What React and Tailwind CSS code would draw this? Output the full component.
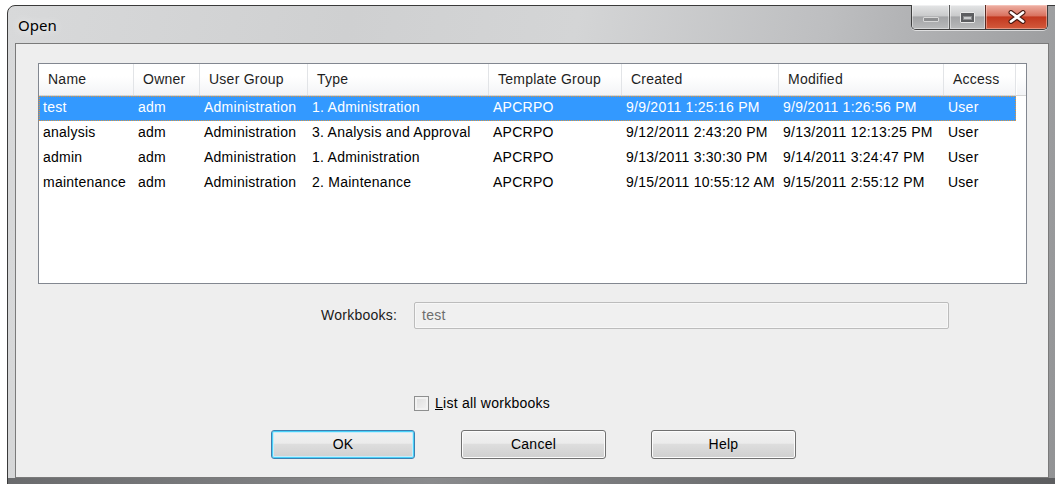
const COLUMNS = [
  { key: 'name', label: 'Name', width: 'w-[95px]' },
  { key: 'owner', label: 'Owner', width: 'w-[66px]' },
  { key: 'group', label: 'User Group', width: 'w-[108px]' },
  { key: 'type', label: 'Type', width: 'w-[181px]' },
  { key: 'template', label: 'Template Group', width: 'w-[133px]' },
  { key: 'created', label: 'Created', width: 'w-[157px]' },
  { key: 'modified', label: 'Modified', width: 'w-[165px]' },
  { key: 'access', label: 'Access', width: 'w-[72px]' },
]

const ROWS = [
  { name: 'test', owner: 'adm', group: 'Administration', type: '1. Administration', template: 'APCRPO', created: '9/9/2011 1:25:16 PM', modified: '9/9/2011 1:26:56 PM', access: 'User' },
  { name: 'analysis', owner: 'adm', group: 'Administration', type: '3. Analysis and Approval', template: 'APCRPO', created: '9/12/2011 2:43:20 PM', modified: '9/13/2011 12:13:25 PM', access: 'User' },
  { name: 'admin', owner: 'adm', group: 'Administration', type: '1. Administration', template: 'APCRPO', created: '9/13/2011 3:30:30 PM', modified: '9/14/2011 3:24:47 PM', access: 'User' },
  { name: 'maintenance', owner: 'adm', group: 'Administration', type: '2. Maintenance', template: 'APCRPO', created: '9/15/2011 10:55:12 AM', modified: '9/15/2011 2:55:12 PM', access: 'User' },
]

function CaptionButtons() {
  return (
    <div className="flex h-[25px] mr-[18px] -mt-px rounded-b-[5px] border border-t-0 border-[#3e3e3e] overflow-hidden shadow-[0_1px_0_rgba(255,255,255,0.6)]">
      <div className="w-[37px] flex items-end justify-center pb-[7px] bg-[linear-gradient(180deg,#e4e5e6_0%,#c9cacb_45%,#a3a4a6_50%,#b9babb_100%)] shadow-[inset_0_0_0_1px_rgba(255,255,255,0.45)]">
        <div className="w-[16px] h-[5px] rounded-[1px] bg-[#8d8e90] border border-[#d8d8d8]" />
      </div>
      <div className="w-[36px] flex items-center justify-center border-l border-[#5a5a5a] bg-[linear-gradient(180deg,#e4e5e6_0%,#c9cacb_45%,#a3a4a6_50%,#b9babb_100%)] shadow-[inset_0_0_0_1px_rgba(255,255,255,0.45)]">
        <div className="w-[15px] h-[11px] rounded-[1px] border border-[#e8e8e8] bg-[#5c5d60] p-[2px] pt-[3px]">
          <div className="w-full h-full bg-[#c9cacc] border border-[#8a8b8d]" />
        </div>
      </div>
      <div className="w-[62px] flex items-center justify-center border-l border-[#5a2a22] bg-[linear-gradient(180deg,#eeb1a5_0%,#d9725f_45%,#c2381f_50%,#d35a3c_100%)] shadow-[inset_0_0_0_1px_rgba(255,220,210,0.45)]">
        <svg width="20" height="14" viewBox="0 0 20 14">
          <path d="M4 2.5 L16 11.5 M16 2.5 L4 11.5" stroke="#4a1a12" strokeWidth="5" strokeLinecap="round" />
          <path d="M4 2.5 L16 11.5 M16 2.5 L4 11.5" stroke="#ffffff" strokeWidth="2.8" strokeLinecap="round" />
        </svg>
      </div>
    </div>
  )
}

function FileList() {
  return (
    <div className="ml-[22px] mt-[19px] w-[989px] h-[221px] border border-[#828790] bg-white flex flex-col">
      {/* column headers */}
      <div className="h-[32px] flex border-b border-[#d5d5d5] bg-[linear-gradient(180deg,#ffffff_0%,#ffffff_40%,#f3f4f6_100%)]">
        {COLUMNS.map(col => (
          <div key={col.key} className={`${col.width} shrink-0 flex items-center pl-[9px] border-r border-[#e2e4e7] text-[#1e1e1e] whitespace-nowrap`}>
            {col.label}
          </div>
        ))}
        <div className="flex-1 border-l border-white" />
      </div>

      {ROWS.map((row, i) => {
        const selected = i === 0
        return (
          <div key={row.name}
            className={selected
              ? 'h-[25px] w-[977px] flex items-center pb-[2px] bg-[#3399ff] text-white border border-dotted border-[#e0963c]'
              : 'h-[25px] w-[977px] flex items-center pb-[2px] text-black border border-transparent'}>
            {COLUMNS.map(col => (
              <div key={col.key} className={`${col.width} shrink-0 pl-[3px] whitespace-nowrap`}>
                {row[col.key]}
              </div>
            ))}
          </div>
        )
      })}
    </div>
  )
}

function Button({ children, primary }) {
  return (
    <button className={primary
      ? 'w-[144px] h-[29px] rounded-[3px] border border-[#3c7fb1] bg-[linear-gradient(180deg,#f2f2f2_0%,#ebebeb_45%,#dddddd_50%,#cfcfcf_100%)] shadow-[inset_0_0_0_1px_#48d0f8,inset_0_0_0_2px_#c5ecfb] text-black'
      : 'w-[145px] h-[29px] rounded-[3px] border border-[#707070] bg-[linear-gradient(180deg,#f2f2f2_0%,#ebebeb_45%,#dddddd_50%,#cfcfcf_100%)] shadow-[inset_0_0_0_1px_#fcfcfc] text-black'}>
      {children}
    </button>
  )
}

export default function App() {
  return (
    <div className="w-[1055px] h-[484px] bg-white overflow-hidden font-['Liberation_Sans',Arial,sans-serif] text-[14px] tracking-[0.25px]">
      <div className="ml-[7px] mt-[5px] w-[1060px] h-[490px] rounded-t-[8px] border border-[#3a3a3a] bg-[linear-gradient(100deg,#d8d9da_0%,#cfd0d1_30%,#d4d5d6_50%,#bdbec0_72%,#909193_100%)] flex flex-col">
        {/* title bar */}
        <div className="h-[37px] flex items-start justify-between pl-[10px]">
          <span className="mt-[9px] text-[15px] leading-[20px] tracking-normal text-black font-['Noto_Sans',sans-serif] [text-shadow:0_0_8px_rgba(255,255,255,0.9)]">Open</span>
          <CaptionButtons />
        </div>

        {/* client area */}
        <div className="ml-[7px] w-[1034px] h-[435px] border border-[#7a7a7a] bg-[#eeeeee] flex flex-col">
          <FileList />

          <div className="mt-[18px] pl-[305px] flex items-center gap-[17px]">
            <span className="w-[76px] text-[#1a1a1a] whitespace-nowrap">Workbooks:</span>
            <div className="w-[535px] h-[27px] rounded-[2px] border border-[#bcbcbc] bg-[#f0f0f0] shadow-[inset_0_0_0_1px_#f7f7f7] flex items-center pl-[7px] text-[#6d6d6d]">
              test
            </div>
          </div>

          <label className="mt-[64px] ml-[398px] flex items-center gap-[6px] text-black">
            <span className="w-[15px] h-[15px] border border-[#8e8f8f] bg-[linear-gradient(135deg,#dcdcdc_0%,#f4f4f4_100%)] shadow-[inset_0_0_0_2px_#f2f2f2]" />
            <span><span className="underline">L</span>ist all workbooks</span>
          </label>

          <div className="mt-[16px] ml-[255px] flex">
            <Button primary>OK</Button>
            <div className="ml-[46px]"><Button>Cancel</Button></div>
            <div className="ml-[45px]"><Button>Help</Button></div>
          </div>
        </div>

        <div className="flex-1 bg-[linear-gradient(90deg,#6a6b6d_0%,#8a8b8d_40%,#6d6e70_70%,#5c5d5f_100%)]" />
      </div>
    </div>
  )
}
